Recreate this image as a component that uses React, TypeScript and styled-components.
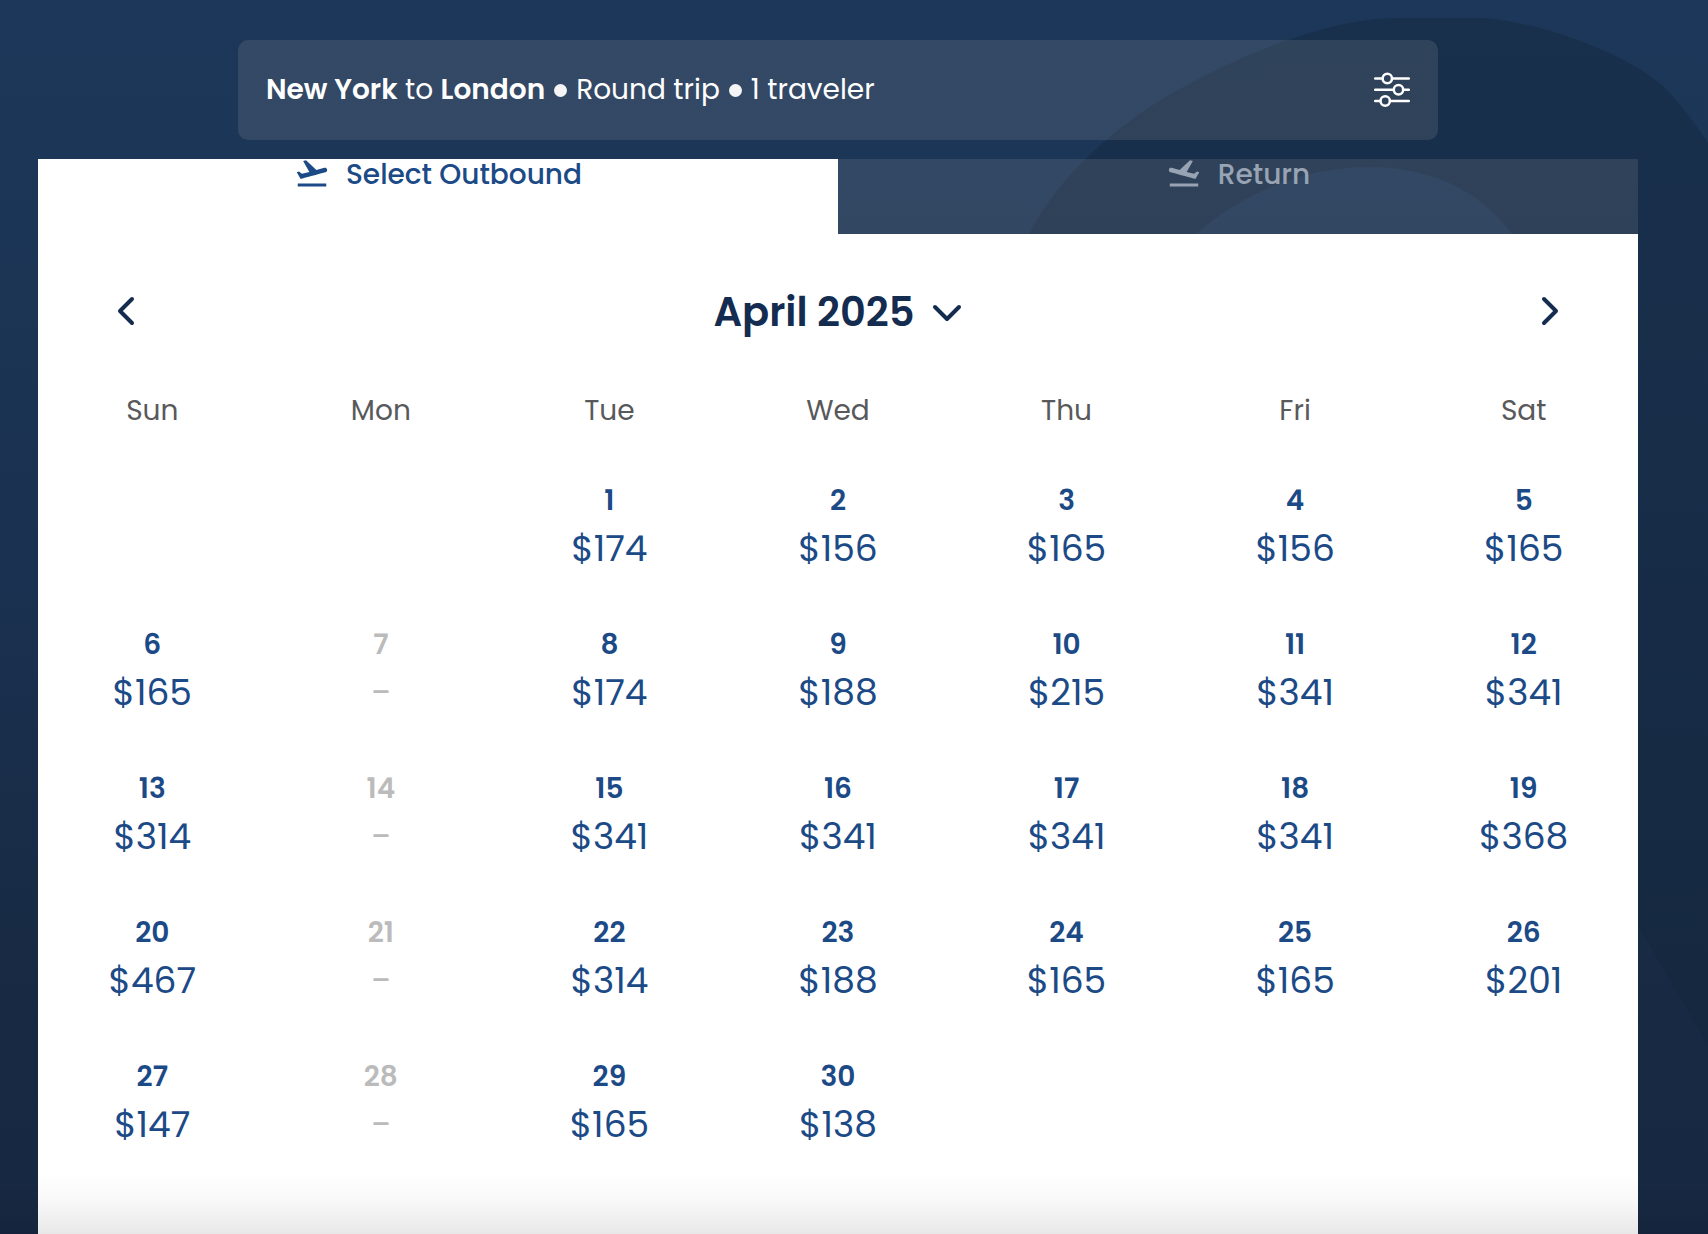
import React, { useState } from "react";
import styled, { createGlobalStyle, css } from "styled-components";
import { MdFlightTakeoff } from "react-icons/md";

const GlobalStyle = createGlobalStyle`
  *, *::before, *::after { box-sizing: border-box; }
  body {
    margin: 0;
    font-family: Poppins, Inter, "Liberation Sans", sans-serif;
    background: #172640;
  }
  button, select { font: inherit; color: inherit; background: none; border: 0; padding: 0; margin: 0; cursor: pointer; }
`;

const Page = styled.div`
  position: relative;
  display: flex;
  flex-direction: column;
  min-height: 100vh;
  padding-right: 32px;
  overflow: hidden;
  isolation: isolate;
  background: linear-gradient(#1c3759 0, #1c3657 14%, #1a304f 50%, #182a43 80%, #172842 100%);
`;

const Backdrop = styled.svg`
  position: absolute;
  inset: 0;
  width: 100%;
  height: 100%;
  z-index: -1;
`;

const BottomFade = styled.div`
  position: absolute;
  left: 0;
  right: 0;
  bottom: 0;
  height: 60px;
  pointer-events: none;
  background: linear-gradient(rgba(0, 0, 0, 0), rgba(0, 0, 0, 0.03) 50%, rgba(0, 0, 0, 0.09));
`;

const Header = styled.header`
  display: flex;
  justify-content: center;
  padding: 40px 38px 19px;
`;

const SearchBar = styled.div`
  display: flex;
  align-items: center;
  justify-content: space-between;
  width: 100%;
  max-width: 1200px;
  height: 100px;
  padding: 0 28px;
  border-radius: 10px;
  background: rgba(255, 240, 220, 0.1);
  color: #fff;
`;

const Summary = styled.p`
  display: flex;
  align-items: center;
  gap: 9px;
  margin: 0;
  font-size: 28px;
  line-height: 40px;
  strong { font-weight: 600; }
`;

const Dot = styled.span`
  width: 13px;
  height: 13px;
  border-radius: 50%;
  background: #f5f5f5;
`;

const IconButton = styled.button`
  display: flex;
  align-items: center;
  justify-content: center;
  color: inherit;
`;

const Panel = styled.main`
  display: flex;
  flex-direction: column;
  flex: 1;
  width: calc(100% - 76px);
  max-width: 1600px;
  margin: 0 auto;
`;

const Tabs = styled.div`
  display: grid;
  grid-template-columns: 1fr 1fr;
`;

const Tab = styled.button<{ $active?: boolean }>`
  display: flex;
  align-items: flex-start;
  justify-content: center;
  gap: 16px;
  height: 75px;
  font-size: 28px;
  font-weight: 500;
  line-height: 32px;
  ${({ $active }) =>
    $active
      ? css`background: #fff; color: #1b4a87;`
      : css`background: rgba(255, 240, 220, 0.1); color: #98a4b4;`}
`;

const TabIcon = styled(MdFlightTakeoff)<{ $mirrored?: boolean }>`
  flex: none;
  width: 36px;
  height: 36px;
  margin-top: -4px;
  ${({ $mirrored }) => $mirrored && css`transform: scaleX(-1);`}
`;

const Calendar = styled.section`
  flex: 1;
  background: #fff;
  padding-top: 52px;
`;

const MonthBar = styled.div`
  display: flex;
  align-items: center;
  justify-content: space-between;
  padding: 0 68px;
  height: 52px;
  color: #132c50;
`;

const MonthPicker = styled.label`
  display: flex;
  align-items: center;
  gap: 16px;
`;

const MonthSelect = styled.select`
  appearance: none;
  field-sizing: content;
  font-size: 40px;
  font-weight: 600;
  line-height: 52px;
`;

const Grid = styled.table`
  width: 100%;
  margin-top: 45px;
  table-layout: fixed;
  border-collapse: collapse;
  text-align: center;
`;

const Weekday = styled.th`
  height: 70px;
  padding: 8px 0 0;
  vertical-align: top;
  font-size: 28px;
  font-weight: 400;
  line-height: 40px;
  color: #58595b;
`;

const Cell = styled.td`
  height: 144px;
  padding: 0;
`;

const DayButton = styled.button`
  display: flex;
  flex-direction: column;
  align-items: center;
  justify-content: center;
  width: 100%;
  height: 144px;
  color: #1b4a87;
  &:disabled { color: #bbb; cursor: default; }
`;

const DayNumber = styled.span`
  font-size: 28px;
  font-weight: 600;
  line-height: 48px;
`;

const Price = styled.span`
  font-size: 36px;
  line-height: 48px;
`;

const NoPrice = styled(Price)`
  font-size: 28px;
  font-weight: 500;
`;

const MONTHS = ["April 2025", "May 2025", "June 2025"];
const WEEKDAYS = ["Sun", "Mon", "Tue", "Wed", "Thu", "Fri", "Sat"];
const FIRST_WEEKDAY = 2;
const FARES: (number | null)[] = [
  174, 156, 165, 156, 165,
  165, null, 174, 188, 215, 341, 341,
  314, null, 341, 341, 341, 341, 368,
  467, null, 314, 188, 165, 165, 201,
  147, null, 165, 138,
];

const WEEKS = Array.from({ length: 5 }, (_, week) =>
  WEEKDAYS.map((_, column) => {
    const day = week * 7 + column - FIRST_WEEKDAY + 1;
    return day >= 1 && day <= FARES.length ? day : null;
  }),
);

const FilterIcon = () => (
  <svg width="36" height="36" viewBox="0 0 36 36" fill="none" stroke="currentColor" strokeWidth="2.5" strokeLinecap="round" aria-hidden="true">
    <path d="M1.200 6.500h7M18 6.500H34.800M1.200 17.700h18.500M29.300 17.700H34.800M1.200 29h5M16 29H34.800" />
    <circle cx="13.300" cy="6.500" r="4.700" />
    <circle cx="24.500" cy="17.700" r="4.700" />
    <circle cx="11.200" cy="29" r="4.700" />
  </svg>
);

const ChevronIcon = ({ d, width, height }: { d: string; width: number; height: number }) => (
  <svg width={width} height={height} viewBox={`0 0 ${width} ${height}`} fill="none" stroke="currentColor" strokeWidth="4" strokeLinecap="round" strokeLinejoin="round" aria-hidden="true">
    <path d={d} />
  </svg>
);

function Fare({ day }: { day: number }) {
  const fare = FARES[day - 1];
  return (
    <DayButton type="button" disabled={fare === null}>
      <DayNumber>{day}</DayNumber>
      {fare === null ? <NoPrice>–</NoPrice> : <Price>${fare}</Price>}
    </DayButton>
  );
}

export default function App() {
  const [month, setMonth] = useState(MONTHS[0]);
  return (
    <>
      <GlobalStyle />
      <Page>
        <Backdrop viewBox="0 0 1708 1234" preserveAspectRatio="xMaxYMin slice" aria-hidden="true">
          <path
            fill="#14263c"
            fillOpacity="0.42"
            d="M1029 234C1060 175 1115 128 1161 100C1220 65 1320 18 1398 18H1486C1560 26 1640 62 1667 90Q1690 115 1708 143V1045L1638 925L1512 234C1480 190 1430 167 1370 167C1300 167 1240 195 1196 234Z"
          />
        </Backdrop>
        <Header>
          <SearchBar>
            <Summary>
              <span><strong>New York</strong> to <strong>London</strong></span>
              <Dot />
              <span>Round trip</span>
              <Dot />
              <span>1 traveler</span>
            </Summary>
            <IconButton type="button" aria-label="Edit search"><FilterIcon /></IconButton>
          </SearchBar>
        </Header>
        <Panel>
          <Tabs role="tablist">
            <Tab type="button" role="tab" aria-selected="true" $active>
              <TabIcon />
              Select Outbound
            </Tab>
            <Tab type="button" role="tab" aria-selected="false">
              <TabIcon $mirrored />
              Return
            </Tab>
          </Tabs>
          <Calendar>
            <MonthBar>
              <IconButton type="button" aria-label="Previous month">
                <ChevronIcon width={40} height={40} d="M26 7L14 19L26 31" />
              </IconButton>
              <MonthPicker>
                <MonthSelect aria-label="Month" value={month} onChange={(e) => setMonth(e.target.value)}>
                  {MONTHS.map((name) => <option key={name}>{name}</option>)}
                </MonthSelect>
                <ChevronIcon width={32} height={20} d="M4 5L16 17L28 5" />
              </MonthPicker>
              <IconButton type="button" aria-label="Next month">
                <ChevronIcon width={40} height={40} d="M14 7L26 19L14 31" />
              </IconButton>
            </MonthBar>
            <Grid>
              <thead>
                <tr>{WEEKDAYS.map((name) => <Weekday key={name} scope="col">{name}</Weekday>)}</tr>
              </thead>
              <tbody>
                {WEEKS.map((week, row) => (
                  <tr key={row}>
                    {week.map((day, column) => (
                      <Cell key={column}>{day !== null && <Fare day={day} />}</Cell>
                    ))}
                  </tr>
                ))}
              </tbody>
            </Grid>
          </Calendar>
        </Panel>
        <BottomFade />
      </Page>
    </>
  );
}
